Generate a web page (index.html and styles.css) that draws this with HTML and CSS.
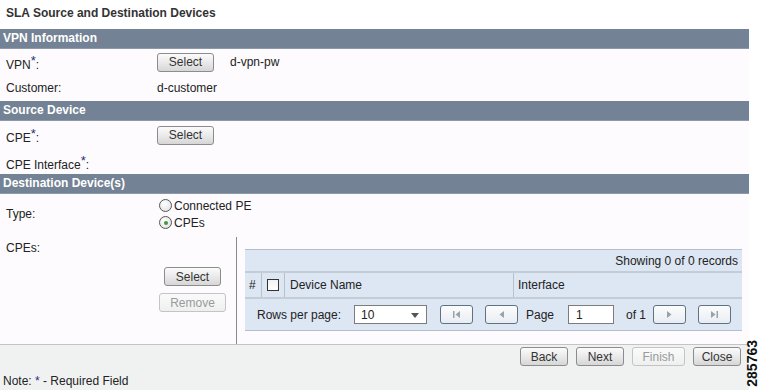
FILE: index.html
```html
<!DOCTYPE html>
<html>
<head>
<meta charset="utf-8">
<link rel="stylesheet" href="styles.css">
</head>
<body>
<div class="page">
  <div class="title">SLA Source and Destination Devices</div>

  <div class="sect">VPN Information</div>
  <div class="row h26">
    <div class="lbl req">VPN<sup>*</sup>:</div>
    <div class="ctl"><button class="btn w57">Select</button><span class="val">d-vpn-pw</span></div>
  </div>
  <div class="row h26">
    <div class="lbl">Customer:</div>
    <div class="ctl">d-customer</div>
  </div>

  <div class="sect">Source Device</div>
  <div class="row h28">
    <div class="lbl req">CPE<sup>*</sup>:</div>
    <div class="ctl"><button class="btn w57">Select</button></div>
  </div>
  <div class="row h25">
    <div class="lbl req">CPE Interface<sup>*</sup>:</div>
    <div class="ctl"></div>
  </div>

  <div class="sect">Destination Device(s)</div>
  <div class="row h39">
    <div class="lbl">Type:</div>
    <div class="radios">
      <label class="radio"><span class="rb"></span>Connected PE</label>
      <label class="radio"><span class="rb on"></span>CPEs</label>
    </div>
  </div>

  <div class="cpes">
    <div class="cpes-left">
      <div class="cpes-lbl">CPEs:</div>
      <div class="cpes-btns">
        <button class="btn w57">Select</button>
        <button class="btn w67 dis">Remove</button>
      </div>
    </div>
    <div class="cpes-right">
      <div class="grid">
        <div class="info">Showing 0 of 0 records</div>
        <div class="thead">
          <div class="th c-num">#</div>
          <div class="th c-chk"><span class="chk"></span></div>
          <div class="th c-name">Device Name</div>
          <div class="th c-int">Interface</div>
        </div>
        <div class="pager">
          <span class="pg-lbl">Rows per page:</span>
          <span class="dd">10<svg class="dd-arrow" width="8" height="5" viewBox="0 0 8 5"><path d="M0 0h8L4 5z" fill="#555"/></svg></span>
          <button class="pbtn m13"><svg width="9" height="9" viewBox="0 0 9 9"><rect x="1" y="1" width="1.5" height="7" fill="#9aa3ab"/><path d="M8 1v7L3.5 4.5z" fill="#9aa3ab"/></svg></button>
          <button class="pbtn m12"><svg width="9" height="9" viewBox="0 0 9 9"><path d="M7 1v7L2.5 4.5z" fill="#9aa3ab"/></svg></button>
          <span class="pg-page">Page</span>
          <span class="pg-in">1</span>
          <span class="pg-of">of 1</span>
          <button class="pbtn m7"><svg width="9" height="9" viewBox="0 0 9 9"><path d="M2 1v7L6.5 4.5z" fill="#9aa3ab"/></svg></button>
          <button class="pbtn m12"><svg width="9" height="9" viewBox="0 0 9 9"><path d="M1 1v7L5.5 4.5z" fill="#9aa3ab"/><rect x="6.5" y="1" width="1.5" height="7" fill="#9aa3ab"/></svg></button>
        </div>
      </div>
    </div>
  </div>

  <div class="footer">
    <div class="actions">
      <button class="btn w48">Back</button>
      <button class="btn w48">Next</button>
      <button class="btn w53 dis">Finish</button>
      <button class="btn w48">Close</button>
    </div>
    <div class="note">Note: <span class="ast">*</span> - Required Field</div>
  </div>
</div>
<div class="figno">285763</div>
</body>
</html>
```

FILE: styles.css
```css
* { box-sizing: border-box; }
body {
  margin: 0;
  background: #fff;
  font: 12px "Liberation Sans", Arial, sans-serif;
  color: #222;
  position: relative;
  width: 764px;
  height: 390px;
  overflow: hidden;
}
.page {
  width: 749px;
  background: #fdfbfd;
}
.title {
  height: 29px;
  line-height: 27px;
  padding-left: 6px;
  font-weight: bold;
  color: #333;
  background: #fff;
}
.sect {
  height: 20px;
  line-height: 19px;
  padding-left: 3px;
  background: #738294;
  border-bottom: 1px solid #8d99a8;
  color: #fff;
  font-weight: bold;
}
.row { display: flex; align-items: center; }
.h25 { height: 25px; }
.h26 { height: 26px; }
.h28 { height: 28px; }
.h39 { height: 39px; }
.lbl { width: 157px; padding-left: 6px; flex: none; }
.lbl.req { padding-top: 6px; }
sup {
  font-size: 13px;
  line-height: 0;
  vertical-align: 4px;
  color: #1d2f7a;
}
.ctl { display: flex; align-items: center; }
.val { margin-left: 16px; }

.btn {
  height: 19px;
  padding: 0;
  font: 12px "Liberation Sans", Arial, sans-serif;
  color: #333;
  border: 1px solid #8c8c8c;
  border-radius: 3px;
  background: linear-gradient(#fbfbfb, #e8e8e8 55%, #d6d6d6);
  text-align: center;
}
.btn.dis {
  color: #9a9a9a;
  border-color: #c4c4c4;
  background: linear-gradient(#fafafa, #eef0f0);
}
.w48 { width: 48px; }
.w53 { width: 53px; }
.w57 { width: 57px; }
.w67 { width: 67px; }

.radios { display: flex; flex-direction: column; padding-top: 1px; margin-left: 2px; }
.radio { display: flex; align-items: center; height: 17px; }
.rb {
  width: 13px; height: 13px;
  border: 1px solid #555;
  border-radius: 50%;
  background: radial-gradient(circle at 40% 35%, #fff, #dcdcdc);
  margin-right: 2px;
  position: relative;
}
.rb.on::after {
  content: "";
  position: absolute;
  left: 3.5px; top: 3.5px;
  width: 4px; height: 4px;
  border-radius: 50%;
  background: #3c9a3c;
}

.cpes { display: flex; height: 111px; }
.cpes-left {
  width: 237px;
  margin-top: 4px;
  border-right: 1px solid #8a8a8a;
  padding-left: 6px;
  flex: none;
}
.cpes-lbl { height: 17px; line-height: 18px; padding-top: 2px; }
.cpes-btns {
  width: 75px;
  margin: 13px 0 0 149px;
  display: flex;
  flex-direction: column;
  align-items: center;
  gap: 7px;
}
.cpes-right { flex: 1; padding: 16px 7px 0 8px; }
.grid {
  background: #dde6f3;
  border-top: 1px solid #b3bfcc;
  border-bottom: 1px solid #b3bfcc;
}
.info {
  height: 23px;
  line-height: 22px;
  text-align: right;
  padding-right: 4px;
  border-bottom: 2px solid #c4ccd6;
}
.thead {
  display: flex;
  height: 26px;
  border-bottom: 2px solid #c4ccd6;
}
.th {
  display: flex;
  align-items: center;
  border-right: 1px solid #b6c1cd;
}
.c-num { width: 17px; padding-left: 4px; }
.c-chk { width: 23px; justify-content: center; }
.c-name { width: 229px; padding-left: 5px; }
.c-int { flex: 1; padding-left: 4px; border-right: none; }
.chk {
  width: 12px; height: 12px;
  border: 1px solid #333;
  background: linear-gradient(#f2f2f2, #fff);
}
.pager {
  display: flex;
  align-items: center;
  height: 31px;
  padding-left: 12px;
}
.pg-lbl { width: 97px; }
.dd {
  width: 73px; height: 19px;
  border: 1px solid #7c7c7c;
  background: #fff;
  display: flex;
  align-items: center;
  padding-left: 6px;
  position: relative;
}
.dd-arrow { position: absolute; right: 7px; top: 7px; }
.pbtn {
  width: 33px; height: 19px;
  padding: 0;
  border: 1px solid #5f7183;
  border-radius: 3px;
  background: linear-gradient(#fbfcfd, #e9edf2);
  display: flex;
  align-items: center;
  justify-content: center;
}
.m13 { margin-left: 13px; }
.m12 { margin-left: 12px; }
.m7 { margin-left: 7px; }
.pg-page { margin-left: 8px; width: 42px; }
.pg-in {
  width: 46px; height: 19px;
  border: 1px solid #7c7c7c;
  background: #fff;
  padding-left: 7px;
  line-height: 18px;
}
.pg-of { margin-left: 12px; }

.footer {
  height: 46px;
  border-top: 1px solid #c4c4c4;
  background: #f0f2f2;
}
.actions {
  display: flex;
  justify-content: flex-end;
  gap: 8px;
  padding: 2px 8px 0 0;
}
.note { margin-top: 8px; padding-left: 3px; line-height: 14px; }
.ast { color: #1d2f7a; }

.figno {
  position: absolute;
  left: 745px;
  top: 340px;
  writing-mode: vertical-rl;
  transform: rotate(180deg);
  font-weight: bold;
  font-size: 14px;
  color: #111;
  line-height: 15px;
}
```
